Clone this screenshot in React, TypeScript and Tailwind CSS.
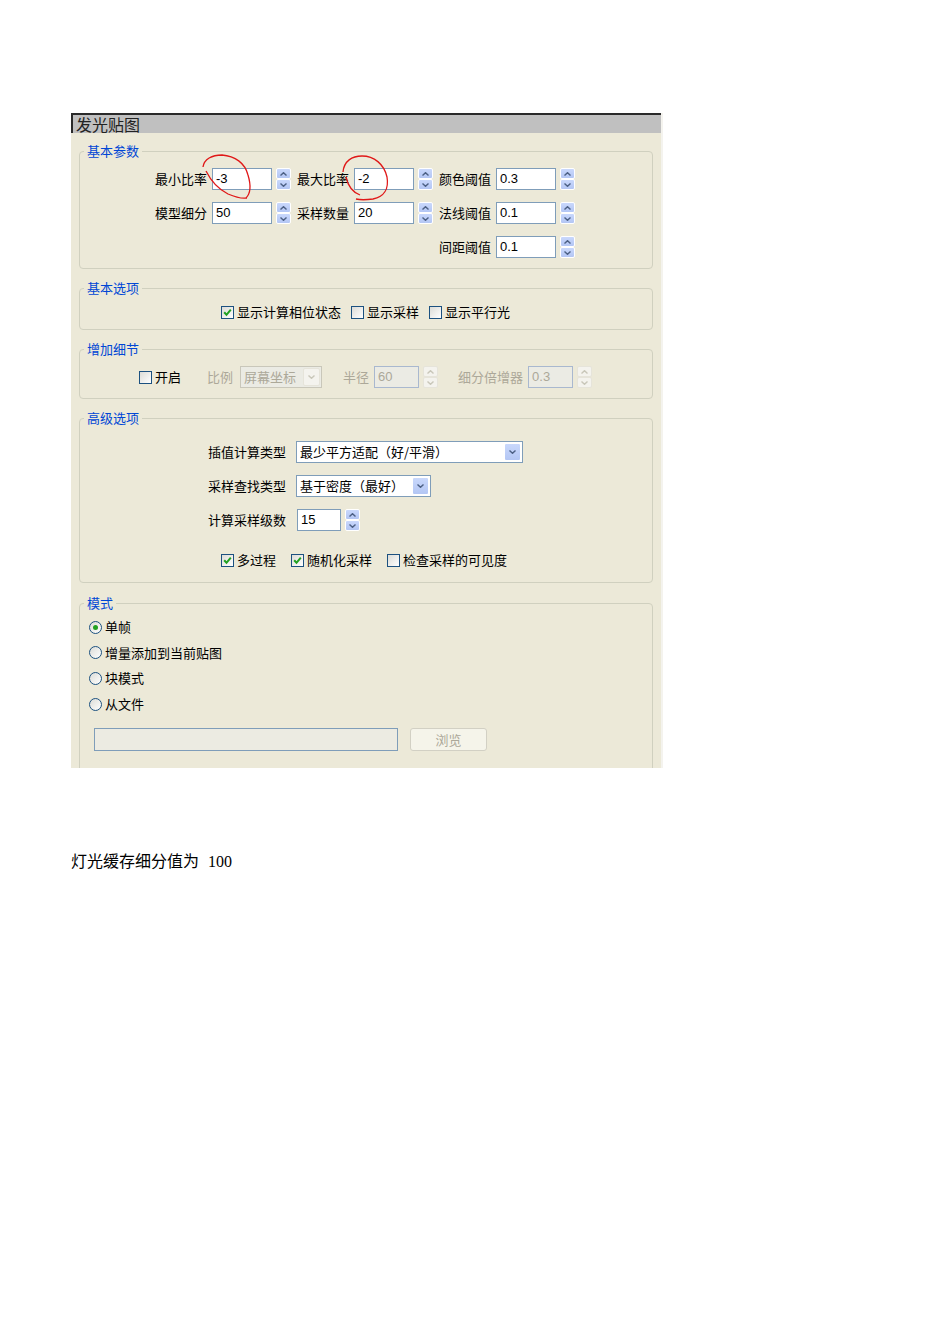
import React from "react";

function Chevron({ dir, color }: { dir: "up" | "down"; color: string }) {
  return (
    <svg width="7" height="4" viewBox="0 0 7 4">
      <path
        d={dir === "up" ? "M0.5 3.5 L3.5 0.7 L6.5 3.5" : "M0.5 0.5 L3.5 3.3 L6.5 0.5"}
        stroke={color}
        strokeWidth="1.4"
        fill="none"
      />
    </svg>
  );
}

function Spinner({ disabled = false }: { disabled?: boolean }) {
  const half = disabled
    ? "flex h-[11px] w-[15px] items-center justify-center rounded-[2px] border border-[#e6e4da] bg-[#f4f3ee]"
    : "flex h-[11px] w-[15px] items-center justify-center rounded-[2px] border border-white bg-gradient-to-b from-[#c9d8fc] to-[#b3c6f4]";
  const c = disabled ? "#c9c7ba" : "#4d6185";
  return (
    <div className="ml-[4px] flex h-[22px] w-[15px] flex-col">
      <div className={half}>
        <Chevron dir="up" color={c} />
      </div>
      <div className={half}>
        <Chevron dir="down" color={c} />
      </div>
    </div>
  );
}

function TextBox({ value, w, disabled = false }: { value: string; w: string; disabled?: boolean }) {
  return (
    <div
      className={`flex h-[22px] items-center border pl-[3px] font-['Liberation_Sans',sans-serif] text-[13px] ${w} ${
        disabled ? "border-[#a9b8cf] bg-[#ebebe4] text-[#aca899]" : "border-[#7f9db9] bg-white text-black"
      }`}
    >
      {value}
    </div>
  );
}

function DropButton({ disabled = false }: { disabled?: boolean }) {
  return (
    <div
      className={`ml-auto mr-[1px] flex h-[18px] w-[17px] items-center justify-center rounded-[2px] border ${
        disabled ? "border-[#e6e4da] bg-[#f4f3ee]" : "border-white bg-gradient-to-b from-[#c9d8fc] to-[#b3c6f4]"
      }`}
    >
      <Chevron dir="down" color={disabled ? "#c9c7ba" : "#4d6185"} />
    </div>
  );
}

function Select({ value, w, disabled = false }: { value: string; w: string; disabled?: boolean }) {
  return (
    <div
      className={`flex h-[22px] items-center border pl-[3px] text-[13px] leading-[16px] ${w} ${
        disabled ? "border-[#c9c7ba] bg-[#ebebe4] text-[#aca899]" : "border-[#7f9db9] bg-white text-black"
      }`}
    >
      <span className="whitespace-nowrap">{value}</span>
      <DropButton disabled={disabled} />
    </div>
  );
}

function Check({ checked = false }: { checked?: boolean }) {
  return (
    <span className="flex h-[13px] w-[13px] shrink-0 items-center justify-center border border-[#1c5180] bg-gradient-to-br from-[#dcdcd7] to-white">
      {checked && (
        <svg width="9" height="9" viewBox="0 0 9 9">
          <path d="M1.2 4.3 L3.5 6.8 L7.8 1.6" stroke="#21a121" strokeWidth="2" fill="none" />
        </svg>
      )}
    </span>
  );
}

function CheckItem({ label, checked = false }: { label: string; checked?: boolean }) {
  return (
    <div className="flex items-center gap-[3px]">
      <Check checked={checked} />
      <span className="whitespace-nowrap text-[13px] leading-[16px]">{label}</span>
    </div>
  );
}

function Radio({ label, checked = false }: { label: string; checked?: boolean }) {
  return (
    <div className="flex h-[16px] items-center gap-[3px]">
      <span className="flex h-[13px] w-[13px] items-center justify-center rounded-full border border-[#1c5180] bg-gradient-to-br from-[#dcdcd7] to-white">
        {checked && <span className="h-[5px] w-[5px] rounded-full bg-[#21a121]" />}
      </span>
      <span className="text-[13px] leading-[16px]">{label}</span>
    </div>
  );
}

function Group({ title, className = "", children }: { title: string; className?: string; children: React.ReactNode }) {
  return (
    <fieldset className={`rounded-[4px] border border-[#d0d0bf] ${className}`}>
      <legend className="ml-[4px] px-[3px] text-[13px] leading-[16px] text-[#0046d5]">{title}</legend>
      {children}
    </fieldset>
  );
}

function Field({ label, value }: { label: string; value: string }) {
  return (
    <div className="flex items-center">
      <span className="w-[57px] whitespace-nowrap text-[13px] leading-[16px]">{label}</span>
      <TextBox value={value} w="w-[60px]" />
      <Spinner />
    </div>
  );
}

export default function App() {
  return (
    <div className="relative min-h-[1344px] bg-white font-['Noto_Sans_CJK_SC',sans-serif] text-black">
      <div className="pl-[71px] pt-[113px]">
        <div className="h-[655px] w-[592px] overflow-hidden border-r-[2px] border-r-[#f4f3ee] bg-[#ece9d8]">
          <div className="flex h-[20px] items-center border-l-2 border-t-2 border-[#2a2a2a] bg-[#c0c0c0] pl-[3px] text-[16px] leading-[18px] text-[#222]">
            <span>发光贴图</span>
          </div>
          <div className="px-[8px] pt-[10px]">
            <Group title="基本参数">
              <div className="grid grid-cols-[142px_142px_142px] gap-y-[12px] pb-[10px] pl-[75px] pt-[9px]">
                <Field label="最小比率" value="-3" />
                <Field label="最大比率" value="-2" />
                <Field label="颜色阈值" value="0.3" />
                <Field label="模型细分" value="50" />
                <Field label="采样数量" value="20" />
                <Field label="法线阈值" value="0.1" />
                <div className="col-start-3">
                  <Field label="间距阈值" value="0.1" />
                </div>
              </div>
            </Group>

            <Group title="基本选项" className="mt-[11px]">
              <div className="mb-[9px] mt-[8px] flex h-[16px] items-center gap-[10px] pl-[141px]">
                <CheckItem label="显示计算相位状态" checked />
                <CheckItem label="显示采样" />
                <CheckItem label="显示平行光" />
              </div>
            </Group>

            <Group title="增加细节" className="mt-[11px]">
              <div className="mb-[10px] mt-[9px] flex h-[22px] items-center pl-[59px] text-[13px] leading-[16px]">
                <CheckItem label="开启" />
                <span className="ml-[26px] text-[#aca899]">比例</span>
                <div className="ml-[7px]">
                  <Select value="屏幕坐标" w="w-[82px]" disabled />
                </div>
                <span className="ml-[21px] text-[#aca899]">半径</span>
                <div className="ml-[5px]">
                  <TextBox value="60" w="w-[45px]" disabled />
                </div>
                <Spinner disabled />
                <span className="ml-[20px] text-[#aca899]">细分倍增器</span>
                <div className="ml-[5px]">
                  <TextBox value="0.3" w="w-[45px]" disabled />
                </div>
                <Spinner disabled />
              </div>
            </Group>

            <Group title="高级选项" className="mt-[11px]">
              <div className="flex flex-col gap-[12px] pl-[128px] pt-[15px]">
                <div className="flex items-center">
                  <span className="w-[78px] whitespace-nowrap text-right text-[13px] leading-[16px]">插值计算类型</span>
                  <div className="ml-[10px]">
                    <Select value="最少平方适配（好/平滑）" w="w-[227px]" />
                  </div>
                </div>
                <div className="flex items-center">
                  <span className="w-[78px] whitespace-nowrap text-right text-[13px] leading-[16px]">采样查找类型</span>
                  <div className="ml-[10px]">
                    <Select value="基于密度（最好）" w="w-[135px]" />
                  </div>
                </div>
                <div className="flex items-center">
                  <span className="w-[78px] whitespace-nowrap text-right text-[13px] leading-[16px]">计算采样级数</span>
                  <div className="ml-[11px]">
                    <TextBox value="15" w="w-[44px]" />
                  </div>
                  <Spinner />
                </div>
              </div>
              <div className="mb-[14px] mt-[21px] flex h-[16px] items-center gap-[15px] pl-[141px]">
                <CheckItem label="多过程" checked />
                <CheckItem label="随机化采样" checked />
                <CheckItem label="检查采样的可见度" />
              </div>
            </Group>

            <Group title="模式" className="mt-[12px]">
              <div className="flex flex-col gap-[9.7px] pl-[9px] pt-[8px]">
                <Radio label="单帧" checked />
                <Radio label="增量添加到当前贴图" />
                <Radio label="块模式" />
                <Radio label="从文件" />
              </div>
              <div className="mt-[16px] flex items-center pb-[30px] pl-[14px]">
                <div className="h-[23px] w-[304px] border border-[#7f9db9] bg-[#ecebe2]" />
                <div className="ml-[12px] flex h-[23px] w-[77px] items-center justify-center rounded-[3px] border border-[#d2d0c4] bg-[#f5f4ea] text-[13px] leading-[16px] text-[#aca899]">
                  浏览
                </div>
              </div>
            </Group>
          </div>
        </div>
        <p className="mt-[85px] font-['Liberation_Serif','Noto_Sans_CJK_SC',serif] text-[16px] leading-[18px] text-black">
          灯光缓存细分值为<span className="ml-[9px]">100</span>
        </p>
      </div>

      <svg className="pointer-events-none absolute left-0 top-0" width="950" height="300" viewBox="0 0 950 300">
        <path
          d="M203 167 C204 159 212 155 222 155 C235 156 245 163 248 175 C251 185 251 193 246 198 M206 171 C211 181 218 189 228 194 C235 197 241 199 247 198"
          stroke="#e01818"
          strokeWidth="1.3"
          fill="none"
        />
        <path
          d="M343 172 C344 161 352 156 362 156 C374 156 384 164 387 177 C389 189 384 197 373 199 C366 200 360 200 356 199 M346 177 C348 186 352 192 360 195"
          stroke="#e01818"
          strokeWidth="1.3"
          fill="none"
        />
      </svg>
    </div>
  );
}
